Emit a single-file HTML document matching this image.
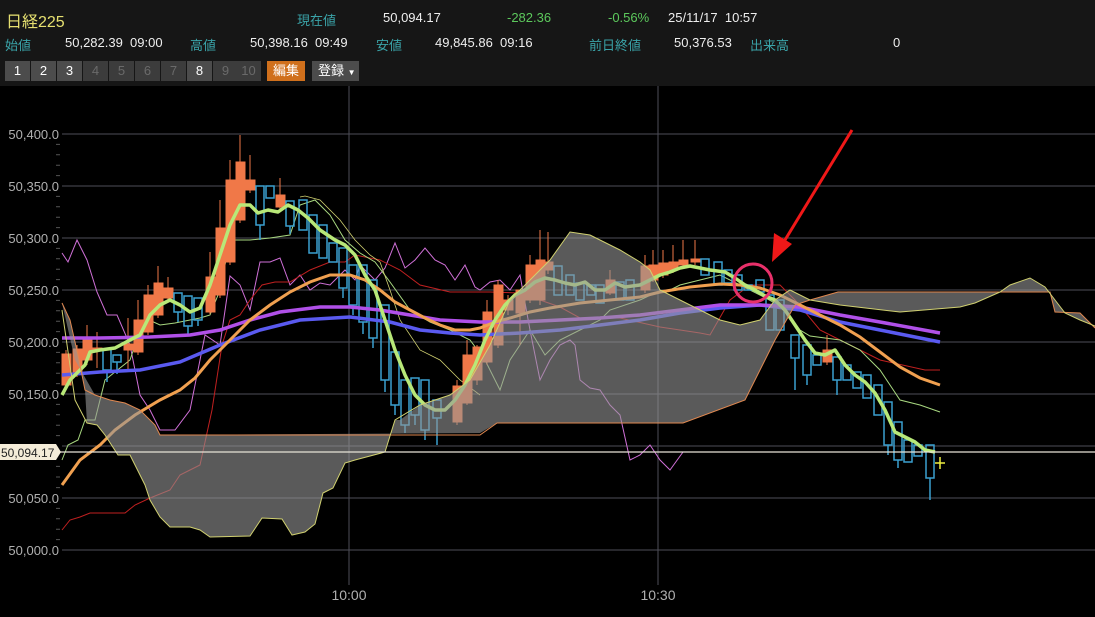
<!DOCTYPE html>
<html><head><meta charset="utf-8"><style>
*{margin:0;padding:0;box-sizing:border-box}
body{width:1095px;height:617px;background:#000;overflow:hidden;font-family:"Liberation Sans","Noto Sans CJK JP",sans-serif;position:relative}
#hdr{position:absolute;left:0;top:0;width:1095px;height:86px;background:#161616}
.t{position:absolute;font-size:13px;white-space:nowrap;color:#eee}
.c{color:#3aa3a8}.g{color:#5cc85c}
.b{position:absolute;top:61px;height:20px;width:25px;background:#3c3c3c;color:#6a6a6a;font-size:13px;text-align:center;line-height:20px}
.b.on{background:#4c4c4c;color:#fff}
svg{position:absolute;left:0;top:0}
</style></head><body>
<div id="hdr">
<div class="t" style="left:6px;top:8px;font-size:16px;color:#e6e070">日経225</div>
<div class="t c" style="left:297px;top:10px">現在値</div>
<div class="t" style="left:383px;top:10px">50,094.17</div>
<div class="t g" style="left:507px;top:10px">-282.36</div>
<div class="t g" style="left:608px;top:10px">-0.56%</div>
<div class="t" style="left:668px;top:10px">25/11/17&nbsp;&nbsp;10:57</div>
<div class="t c" style="left:5px;top:35px">始値</div>
<div class="t" style="left:65px;top:35px">50,282.39&nbsp;&nbsp;09:00</div>
<div class="t c" style="left:190px;top:35px">高値</div>
<div class="t" style="left:250px;top:35px">50,398.16&nbsp;&nbsp;09:49</div>
<div class="t c" style="left:376px;top:35px">安値</div>
<div class="t" style="left:435px;top:35px">49,845.86&nbsp;&nbsp;09:16</div>
<div class="t c" style="left:589px;top:35px">前日終値</div>
<div class="t" style="left:674px;top:35px">50,376.53</div>
<div class="t c" style="left:750px;top:35px">出来高</div>
<div class="t" style="left:893px;top:35px">0</div>
<div class="b on" style="left:5px">1</div><div class="b on" style="left:31px">2</div><div class="b on" style="left:57px">3</div>
<div class="b" style="left:83px">4</div><div class="b" style="left:109px">5</div><div class="b" style="left:135px">6</div>
<div class="b" style="left:161px">7</div><div class="b on" style="left:187px">8</div><div class="b" style="left:213px">9</div>
<div class="b" style="left:236px">10</div>
<div class="b" style="left:267px;width:38px;background:#d0701c;color:#fff">編集</div>
<div class="b" style="left:312px;width:47px;background:#4c4c4c;color:#fff;text-align:left;padding-left:6px">登録 <span style="font-size:8px">▼</span></div>
</div>
<svg width="1095" height="617" viewBox="0 0 1095 617" style="top:0">
<g stroke="#4e4e58" stroke-width="1">
<line x1="62" y1="134" x2="1095" y2="134"/><line x1="62" y1="186" x2="1095" y2="186"/><line x1="62" y1="238" x2="1095" y2="238"/><line x1="62" y1="290" x2="1095" y2="290"/><line x1="62" y1="342" x2="1095" y2="342"/><line x1="62" y1="394" x2="1095" y2="394"/><line x1="62" y1="446" x2="1095" y2="446"/><line x1="62" y1="498" x2="1095" y2="498"/><line x1="62" y1="550" x2="1095" y2="550"/>
<line x1="349" y1="86" x2="349" y2="585"/><line x1="658" y1="86" x2="658" y2="585"/>
</g>
<g stroke="#555" stroke-width="1">
<path d="M56 144.4h4M56 154.8h4M56 165.2h4M56 175.6h4M56 196.4h4M56 206.8h4M56 217.2h4M56 227.6h4M56 248.4h4M56 258.8h4M56 269.2h4M56 279.6h4M56 300.4h4M56 310.8h4M56 321.2h4M56 331.6h4M56 352.4h4M56 362.8h4M56 373.2h4M56 383.6h4M56 404.4h4M56 414.8h4M56 425.2h4M56 435.6h4M56 466.4h4M56 477h4M56 487.6h4M56 508.4h4M56 518.8h4M56 529.2h4M56 539.6h4"/>
</g>
<g fill="#b0b0b0" font-size="13" font-family="Liberation Sans,sans-serif" text-anchor="end">
<text x="59" y="139">50,400.0</text><text x="59" y="191">50,350.0</text><text x="59" y="243">50,300.0</text><text x="59" y="295">50,250.0</text><text x="59" y="347">50,200.0</text><text x="59" y="399">50,150.0</text><text x="59" y="503">50,050.0</text><text x="59" y="555">50,000.0</text>
</g>
<g fill="#b0b0b0" font-size="14" text-anchor="middle"><text x="349" y="600">10:00</text><text x="658" y="600">10:30</text></g>
<!-- thin lines -->
<polyline fill="none" stroke="#d070d8" stroke-width="1" points="62,253 68,262 77,240 87,260 97,292 107,315 117,315 130,345 140,395 150,410 160,430 175,430 190,410 205,335 220,345 230,276 240,285 250,310 260,262 270,262 280,258 290,285 300,275 310,290 320,283 330,285 345,270 355,280 360,265 375,280 385,268 395,243 405,268 415,260 425,248 435,260 445,265 455,280 465,265 475,287 480,290 490,282 500,280 510,290 520,275 530,330 540,380 550,360 560,345 570,340 575,345 580,380 590,388 600,390 610,405 620,415 630,460 640,455 650,445 660,460 670,470 683,452"/>
<polyline fill="none" stroke="#c02020" stroke-width="1" points="62,530 70,520 80,517 90,513 125,513 135,505 150,498 170,490 180,475 190,470 200,465 212,410 222,345 230,320 240,315 250,300 262,285 275,282 290,282 310,270 330,262 345,262 355,255 380,260 400,270 420,285 450,292 490,292 520,293 560,307 580,318 620,318 660,327 700,333 710,335 730,300 750,285 780,285 795,300 820,330 840,340 880,360 925,370 940,370"/>
<polyline fill="none" stroke="#a8d880" stroke-width="1" points="62,460 68,445 78,440 85,420 95,420 105,380 120,368 130,360 135,345 145,318 160,325 175,323 200,318 210,315 220,290 230,240 240,240 250,240 270,238 290,235 300,205 315,200 330,215 345,240 360,253 375,262 390,282 410,310 430,322 450,330 470,340 485,360 500,390 510,360 530,330 545,355 560,340 580,330 600,320 610,310 640,300 655,293 670,290 680,285 700,280 720,275 740,285 760,295 775,303 790,316 800,330 810,336 840,340 860,350 880,370 900,400 920,405 940,412"/>
<polyline fill="none" stroke="#d0d070" stroke-width="0.8" points="300,197 305,196 320,200 340,220 355,240 370,255 380,262 390,290 400,320 420,350 440,360 460,380 480,395"/>
<!-- candles -->
<g fill="#f07848" stroke="#f07848" stroke-width="1">
<path d="M66 350v40M77 345v32M87 325v40M97 332v36M128 318v52M138 300v55M148 285v50M158 266v52M168 277v25M210 252v62M220 200v98M230 160v105M240 135v88M250 155v38M280 178v32M457 380v45M467 340v65M477 345v40M487 300v65M498 280v68M508 295v20M520 290v55M530 255v48M540 230v75M548 232v42M610 270v25M645 255v38M653 250v32M663 250v28M673 245v28M683 240v27M695 240v25M827 335v30"/>
<rect x="62" y="354" width="9" height="31"/><rect x="73" y="349" width="9" height="24"/><rect x="83" y="340" width="9" height="20"/><rect x="93" y="348" width="9" height="3"/><rect x="124" y="344" width="9" height="6"/><rect x="134" y="320" width="9" height="32"/><rect x="144" y="295" width="9" height="37"/><rect x="154" y="283" width="9" height="32"/><rect x="164" y="288" width="9" height="10"/><rect x="206" y="277" width="9" height="35"/><rect x="216" y="228" width="9" height="67"/><rect x="226" y="180" width="9" height="82"/><rect x="236" y="162" width="9" height="58"/><rect x="246" y="180" width="9" height="10"/><rect x="276" y="195" width="9" height="12"/><rect x="453" y="386" width="9" height="36"/><rect x="463" y="355" width="9" height="48"/><rect x="473" y="347" width="9" height="33"/><rect x="483" y="312" width="9" height="50"/><rect x="494" y="285" width="9" height="60"/><rect x="504" y="300" width="9" height="10"/><rect x="516" y="290" width="9" height="23"/><rect x="526" y="265" width="9" height="35"/><rect x="536" y="260" width="9" height="40"/><rect x="544" y="262" width="9" height="8"/><rect x="606" y="280" width="9" height="13"/><rect x="641" y="266" width="9" height="24"/><rect x="649" y="265" width="9" height="15"/><rect x="659" y="263" width="9" height="12"/><rect x="669" y="262" width="9" height="8"/><rect x="679" y="260" width="9" height="5"/><rect x="691" y="259" width="9" height="3"/><rect x="823" y="350" width="9" height="12"/>
</g>
<g fill="none" stroke="#3aa0d0" stroke-width="1.5">
<path d="M107 370v12M117 362v12M178 312v10M188 326v8M198 320v6M260 225v15M290 226v8M343 288v10M353 305v10M363 322v12M373 338v10M385 380v12M395 405v10M405 425v8M415 415v10M425 430v10M437 418v27M795 358v32M807 375v10M837 380v15M888 445v10M898 460v8M930 478v22"/>
<rect x="103" y="349" width="8" height="21"/><rect x="113" y="355" width="8" height="7"/><rect x="174" y="293" width="8" height="19"/><rect x="184" y="296" width="8" height="30"/><rect x="194" y="298" width="8" height="22"/><rect x="256" y="186" width="8" height="39"/><rect x="266" y="186" width="8" height="12"/><rect x="286" y="201" width="8" height="25"/><rect x="299" y="200" width="8" height="30"/><rect x="309" y="215" width="8" height="38"/><rect x="319" y="225" width="8" height="33"/><rect x="329" y="243" width="8" height="19"/><rect x="339" y="248" width="8" height="40"/><rect x="349" y="265" width="8" height="40"/><rect x="359" y="265" width="8" height="57"/><rect x="369" y="280" width="8" height="58"/><rect x="381" y="305" width="8" height="75"/><rect x="391" y="352" width="8" height="53"/><rect x="401" y="380" width="8" height="45"/><rect x="411" y="378" width="8" height="37"/><rect x="421" y="380" width="8" height="50"/><rect x="433" y="400" width="8" height="18"/><rect x="554" y="266" width="8" height="29"/><rect x="566" y="275" width="8" height="20"/><rect x="576" y="283" width="8" height="17"/><rect x="587" y="285" width="8" height="10"/><rect x="596" y="285" width="8" height="18"/><rect x="616" y="282" width="8" height="18"/><rect x="626" y="280" width="8" height="20"/><rect x="701" y="259" width="8" height="16"/><rect x="714" y="262" width="8" height="23"/><rect x="724" y="270" width="8" height="13"/><rect x="734" y="275" width="8" height="15"/><rect x="744" y="285" width="8" height="5"/><rect x="756" y="280" width="8" height="12"/><rect x="766" y="295" width="8" height="35"/><rect x="776" y="300" width="8" height="30"/><rect x="791" y="335" width="8" height="23"/><rect x="803" y="345" width="8" height="30"/><rect x="813" y="355" width="8" height="10"/><rect x="833" y="357" width="8" height="23"/><rect x="843" y="365" width="8" height="15"/><rect x="853" y="372" width="8" height="16"/><rect x="863" y="375" width="8" height="23"/><rect x="874" y="385" width="8" height="30"/><rect x="884" y="402" width="8" height="43"/><rect x="894" y="422" width="8" height="38"/><rect x="904" y="440" width="8" height="22"/><rect x="914" y="445" width="8" height="11"/><rect x="926" y="445" width="8" height="33"/>
</g>
<path d="M935 463h10M940 457v12" stroke="#f0f040" stroke-width="1.5"/>
<!-- MAs -->
<polyline fill="none" stroke="#5a5af0" stroke-width="3.5" points="62,375 100,372 140,370 180,362 220,345 260,330 300,320 350,317 390,322 420,330 450,333 480,335 520,333 560,330 600,325 640,320 680,313 720,308 760,305 800,310 840,322 880,330 940,342"/>
<polyline fill="none" stroke="#b050e8" stroke-width="3.5" points="62,338 100,338 150,337 190,335 220,330 250,320 280,312 320,307 350,307 380,310 410,315 440,320 480,322 520,322 560,320 600,318 640,315 680,310 720,305 760,305 800,307 840,315 880,322 940,333"/>
<polyline fill="none" stroke="#f0a050" stroke-width="3" points="62,485 80,460 100,445 115,430 135,415 160,400 180,390 195,378 210,360 230,340 250,320 270,305 290,292 310,282 330,275 350,275 365,280 380,290 395,302 410,310 425,318 440,325 455,330 470,330 480,328 495,322 510,318 530,312 550,308 580,303 610,300 640,297 660,292 690,287 720,284 740,285 760,288 780,295 800,305 820,315 840,325 860,337 880,352 900,367 920,378 940,385"/>
<polyline fill="none" stroke="#b8e878" stroke-width="3.5" stroke-linejoin="round" points="62,395 70,380 85,365 90,352 100,350 115,348 130,340 140,335 150,315 160,305 170,300 180,305 190,312 200,308 210,285 220,255 230,225 240,205 250,205 258,213 268,210 278,212 288,205 298,210 308,218 320,230 335,240 345,245 355,255 365,275 375,290 385,320 395,350 405,375 415,395 425,405 435,410 445,410 455,400 465,385 475,365 485,340 495,320 505,305 515,295 525,290 535,282 545,278 555,280 565,283 575,285 585,282 595,290 605,290 615,283 625,287 640,285 650,280 660,275 670,272 680,268 690,266 700,268 710,270 725,272 735,278 745,285 755,290 765,296 775,300 785,310 795,325 805,340 815,353 825,355 835,350 845,365 855,375 865,382 875,393 885,410 895,432 905,437 915,442 925,450 935,452"/>
<!-- cloud (translucent overlay) -->
<polygon fill="#969696" fill-opacity="0.6" points="62,303 70,320 78,355 85,390 87,423 97,425 105,435 118,455 130,455 145,485 150,500 160,517 170,527 190,527 200,530 210,537 250,536 262,518 282,519 292,535 305,532 315,524 323,493 333,488 345,463 355,460 385,452 395,420 400,420 420,405 450,395 470,380 490,345 510,300 530,280 550,260 570,232 590,235 620,250 640,262 650,270 660,290 680,300 700,310 720,320 740,325 760,320 775,300 790,290 810,300 840,305 900,312 960,307 975,303 1000,292 1010,285 1030,278 1045,287 1055,300 1065,313 1080,320 1095,326 1095,328 1080,313 1055,312 1050,292 838,292 810,300 795,305 775,340 760,370 745,400 683,423 497,423 480,433 160,435 155,425 140,410 125,403 110,400 95,395 75,360"/>
<polyline fill="none" stroke="#e08850" stroke-width="1" points="62,303 70,320 78,355 85,390 95,395 110,400 125,403 140,410 155,425 160,435 480,435 497,423 683,423 745,400 760,370 775,340 795,305 810,300 838,292 1050,292 1055,312 1080,313 1095,328"/>
<polyline fill="none" stroke="#d0d070" stroke-width="1" points="62,310 75,400 87,423 97,425 105,435 118,455 130,455 145,485 150,500 160,517 170,527 190,527 200,530 210,537 250,536 262,518 282,519 292,535 305,532 315,524 323,493 333,488 345,463 355,460 385,452 395,420 420,405 450,395 470,380 490,345 510,300 530,280 550,260 570,232 590,235 620,250 640,262 650,270 660,290 680,300 700,310 720,320 740,325 760,320 775,300 790,290 810,300 840,305 900,312 960,307 975,303 1000,292 1010,285 1030,278 1045,287 1055,300 1065,313 1080,320 1095,326"/>
<!-- current price -->
<line x1="0" y1="452" x2="1095" y2="452" stroke="#e8e4d8" stroke-width="1.2"/>
<polygon points="0,444 56,444 61,452 56,460 0,460" fill="#f4ecd8"/>
<text x="1" y="457" font-size="12" fill="#222">50,094.17</text>
<!-- annotations -->
<circle cx="753" cy="283" r="19" fill="none" stroke="#e8306a" stroke-width="3"/>
<line x1="852" y1="130" x2="785" y2="240" stroke="#f01818" stroke-width="3"/>
<polygon points="772,262 774,233 792,244" fill="#f01818"/>
</svg>
</body></html>
